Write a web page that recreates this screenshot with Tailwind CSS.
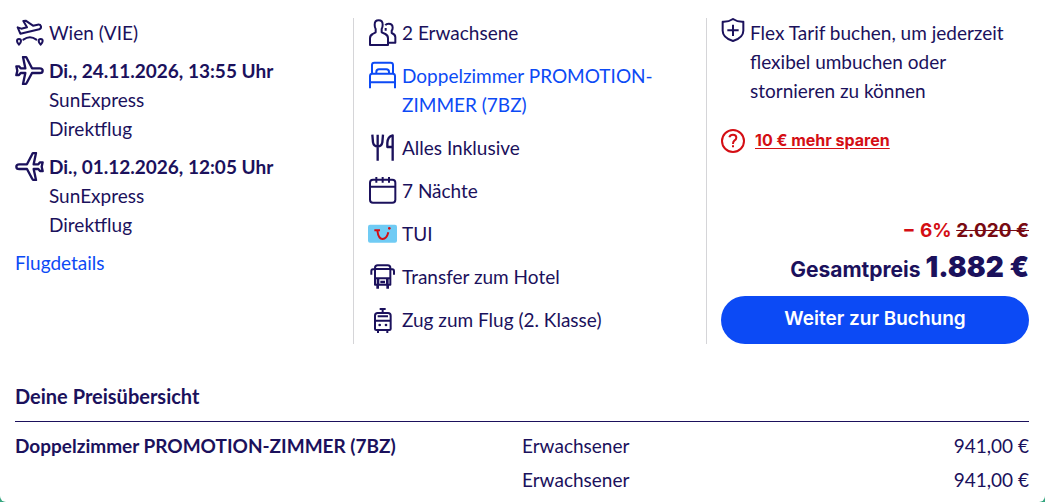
<!DOCTYPE html>
<html lang="de">
<head>
    <meta charset="UTF-8">
    <meta name="viewport" content="width=device-width, initial-scale=1.0">
    <title>Preisübersicht</title>
    <script src="https://cdn.jsdelivr.net/npm/@tailwindcss/browser@4"></script>
</head>
<body class="bg-[#35a67f]">
    <main class="min-h-screen rounded-b-md bg-white pt-[18px] pb-1 font-['Lato','Liberation_Sans',sans-serif] text-[19px] leading-[29px] text-[#1b115c]">
        <div class="grid grid-cols-[353fr_353fr_339fr]">
            <!-- Flights -->
            <section class="flex flex-col gap-[9px] pl-[15px] pr-4">
                <div class="flex gap-[5px]">
                    <svg class="h-[29px] w-[29px] shrink-0" viewBox="45 26 87 87" fill="none" stroke="currentColor" stroke-width="6" stroke-linecap="round" stroke-linejoin="round">
                        <path d="M53 54L61 73L118 60Q124 57 123 51Q121 45 113 46L99 49L77 34L70 35L81 54L64 58Z"/>
                        <path d="M70 91Q90 77 109 91"/>
                        <path d="M57 106Q51 99 51 95A6 6 0 0 1 63 95Q63 99 57 106ZM122 106Q116 99 116 95A6 6 0 0 1 128 95Q128 99 122 106Z"/>
                    </svg>
                    <p>Wien (VIE)</p>
                </div>
                <div class="flex gap-[5px]">
                    <svg class="h-[29px] w-[29px] shrink-0" viewBox="45 138 87 87" fill="none" stroke="currentColor" stroke-width="7" stroke-linejoin="round">
                        <path d="M128 182Q128 175 119 175H96L80 144Q79 141 75 141H69L76 175H62L57 169H49L52 182L49 195H57L62 189H76L69 222H75Q79 222 80 219L96 189H119Q128 189 128 182Z"/>
                    </svg>
                    <div>
                        <p class="font-bold">Di., 24.11.2026, 13:55 Uhr</p>
                        <p>SunExpress</p>
                        <p>Direktflug</p>
                    </div>
                </div>
                <div class="flex gap-[5px]">
                    <svg class="h-[29px] w-[29px] shrink-0 -scale-x-100" viewBox="45 138 87 87" fill="none" stroke="currentColor" stroke-width="7" stroke-linejoin="round">
                        <path d="M128 182Q128 175 119 175H96L80 144Q79 141 75 141H69L76 175H62L57 169H49L52 182L49 195H57L62 189H76L69 222H75Q79 222 80 219L96 189H119Q128 189 128 182Z"/>
                    </svg>
                    <div>
                        <p class="font-bold">Di., 01.12.2026, 12:05 Uhr</p>
                        <p>SunExpress</p>
                        <p>Direktflug</p>
                    </div>
                </div>
                <a href="#" class="self-start text-[#0c4af5]">Flugdetails</a>
            </section>

            <!-- Services -->
            <section class="border-l border-[#d5d5d8] pl-[14px] pr-4 pb-[10px]">
                <ul class="flex flex-col gap-[14px]">
                    <li class="flex gap-[5px]">
                        <svg class="h-[29px] w-[29px] shrink-0" viewBox="39 24 87 87" fill="none" stroke="currentColor" stroke-width="6" stroke-linejoin="round">
                            <path d="M45 105V85Q45 76 53 72L62 67V57Q59 52 59 44Q59 31 71 31T83 44Q83 52 80 57V67L91 72Q99 76 99 85V105Z"/>
                            <path d="M91 46Q94 41 101 41Q113 41 113 53Q113 59 110 62V69Q121 73 121 82V98H100M92 54V62"/>
                        </svg>
                        <span>2 Erwachsene</span>
                    </li>
                    <li class="flex gap-[5px] text-[#0c4af5]">
                        <svg class="h-[29px] w-[29px] shrink-0" viewBox="39 154 87 87" fill="none" stroke="currentColor" stroke-width="6" stroke-linejoin="round">
                            <path d="M51 192V166Q51 159 58 159H107Q114 159 114 166V192M64 191V187Q64 179 72 179H94Q102 179 102 187V191M45 236V199Q45 192 52 192H113Q120 192 120 199V236M45 218H120"/>
                        </svg>
                        <a href="#">Doppelzimmer PROMOTION-ZIMMER (7BZ)</a>
                    </li>
                    <li class="flex gap-[5px]">
                        <svg class="h-[29px] w-[29px] shrink-0" viewBox="39 24 87 87" fill="none" stroke="currentColor" stroke-width="7" stroke-linejoin="round">
                            <path d="M52 29L54 52Q56 64 68 64T82 52L84 29M68 29V107M113 107V31Q98 34 97 54V66H113"/>
                        </svg>
                        <span>Alles Inklusive</span>
                    </li>
                    <li class="flex gap-[5px]">
                        <svg class="h-[29px] w-[29px] shrink-0" viewBox="39 154 87 87" fill="none" stroke="currentColor" stroke-width="6">
                            <rect x="45" y="165" width="76" height="69" rx="9"/>
                            <path d="M45 186H121M64 157V174M83 157V174M102 157V174"/>
                        </svg>
                        <span>7 Nächte</span>
                    </li>
                    <li class="flex gap-[5px]">
                        <svg class="h-[29px] w-[29px] shrink-0" viewBox="39 283 87 87">
                            <rect x="39" y="300" width="87" height="54" rx="6" fill="#70cbf4"/>
                            <path d="M58 317H75M67 317Q70 343 83 343Q95 343 100 323" fill="none" stroke="#d40e14" stroke-width="6"/>
                            <circle cx="103" cy="311" r="4" fill="#d40e14"/>
                        </svg>
                        <span>TUI</span>
                    </li>
                    <li class="flex gap-[5px]">
                        <svg class="h-[29px] w-[29px] shrink-0" viewBox="39 126 87 87" fill="none" stroke="currentColor" stroke-width="6" stroke-linejoin="round">
                            <path d="M60 194V144Q60 136 68 136H98Q106 136 106 144V194ZM60 147H106M60 175H106M60 148H54Q49 148 49 154V164M106 148H112Q117 148 117 154V164"/>
                            <path d="M69 176V192M97 176V192M76 186H90M68 195V206M98 195V206" stroke-width="8"/>
                        </svg>
                        <span>Transfer zum Hotel</span>
                    </li>
                    <li class="flex gap-[5px]">
                        <svg class="h-[29px] w-[29px] shrink-0" viewBox="39 256 87 87" fill="none" stroke="currentColor" stroke-width="6" stroke-linejoin="round">
                            <path d="M60 328V288Q60 280 68 280H99Q107 280 107 288V328Q107 331 103 331H64Q60 331 60 328ZM60 303H107M74 268H92M83 268V279M68 290H99M69 332V340M97 332V340"/>
                            <circle cx="74" cy="316" r="4" fill="currentColor" stroke="none"/>
                            <circle cx="93" cy="316" r="4" fill="currentColor" stroke="none"/>
                        </svg>
                        <span>Zug zum Flug (2. Klasse)</span>
                    </li>
                </ul>
            </section>

            <!-- Price and booking -->
            <section class="flex flex-col border-l border-[#d5d5d8] pl-[14px] pr-4">
                <div class="flex gap-[5px]">
                    <svg class="h-6 w-6 shrink-0" viewBox="63 24 72 72" fill="none" stroke="currentColor" stroke-width="6" stroke-linejoin="round">
                        <path d="M99 27Q112 36 130 35V62Q130 83 99 93Q68 83 68 62V35Q86 36 99 27ZM99 44V78M82 61H116"/>
                    </svg>
                    <p>Flex Tarif buchen, um jederzeit flexibel umbuchen oder stornieren zu können</p>
                </div>
                <div class="mt-[21px] flex items-center gap-[10px] text-[#d40e14]">
                    <svg class="h-6 w-6 shrink-0" viewBox="63 354 72 72" fill="none" stroke="currentColor" stroke-width="6">
                        <circle cx="99" cy="390" r="33"/>
                        <path d="M88 379Q90 371 99 371Q109 371 109 380Q109 385 103 389Q99 392 99 399M99 403V409"/>
                    </svg>
                    <a href="#" class="font-['Inter','Liberation_Sans',sans-serif] text-[16px] font-bold underline underline-offset-2">10 € mehr sparen</a>
                </div>
                <div class="mt-auto text-right font-['Inter','Liberation_Sans',sans-serif] font-bold">
                    <p class="text-[19px] text-[#d40e14]">− 6% <s class="text-[#780a12]">2.020 €</s></p>
                    <p class="mt-2 text-[21px]">Gesamtpreis <strong class="text-[28px]">1.882 €</strong></p>
                </div>
                <button type="button" class="mt-3 h-12 w-full rounded-full bg-[#0c4af5] pb-1 font-['Inter','Liberation_Sans',sans-serif] text-[19px] font-semibold text-white">Weiter zur Buchung</button>
            </section>
        </div>

        <!-- Price overview -->
        <section class="mt-[38px] pl-[15px] pr-4">
            <h2 class="border-b border-[#1b115c] pb-[10px] text-[20px] font-bold">Deine Preisübersicht</h2>
            <table class="mt-[6px] w-full">
                <tbody>
                    <tr class="h-[34px]">
                        <th scope="row" class="w-1/2 text-left font-bold">Doppelzimmer PROMOTION-ZIMMER (7BZ)</th>
                        <td>Erwachsener</td>
                        <td class="text-right">941,00 €</td>
                    </tr>
                    <tr class="h-[34px]">
                        <td></td>
                        <td>Erwachsener</td>
                        <td class="text-right">941,00 €</td>
                    </tr>
                </tbody>
            </table>
        </section>
    </main>
</body>
</html>
